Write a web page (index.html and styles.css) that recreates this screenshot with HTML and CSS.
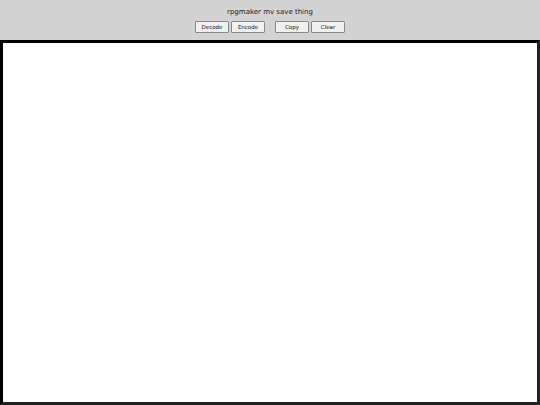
FILE: index.html
```html
<!DOCTYPE html>
<html>
<head>
<meta charset="utf-8">
<title>rpgmaker mv save thing</title>
<link rel="stylesheet" href="styles.css">
</head>
<body>
<header class="top">
  <div class="title">rpgmaker mv save thing</div>
  <div class="buttons">
    <div class="group">
      <button class="btn">Decode</button>
      <button class="btn">Encode</button>
    </div>
    <div class="group">
      <button class="btn">Copy</button>
      <button class="btn">Clear</button>
    </div>
  </div>
</header>
<textarea class="editor"></textarea>
</body>
</html>
```
FILE: styles.css
```css
html, body {
  margin: 0;
  padding: 0;
  height: 100%;
}
body {
  background: #d3d3d3;
  display: flex;
  flex-direction: column;
  font-family: "DejaVu Sans", Verdana, sans-serif;
}
.top {
  height: 40px;
  display: flex;
  flex-direction: column;
  align-items: center;
  flex: none;
}
.title {
  font-size: 7px;
  color: #222;
  margin-top: 7px;
  line-height: 10px;
}
.buttons {
  display: flex;
  gap: 10px;
  margin-top: 4px;
}
.group {
  display: flex;
  gap: 2px;
}
.btn {
  width: 34px;
  height: 12px;
  padding: 0;
  font-family: "DejaVu Sans", Verdana, sans-serif;
  font-size: 5.5px;
  color: #111;
  background: #f0f0f0;
  border: 1px solid #8a8a8a;
  border-radius: 1px;
}
.editor {
  flex: 1;
  margin: 0;
  width: 100%;
  box-sizing: border-box;
  background: #fff;
  border: 3px solid #000;
  border-right-color: #222;
  border-bottom-color: #222;
  resize: none;
  outline: none;
}
```
